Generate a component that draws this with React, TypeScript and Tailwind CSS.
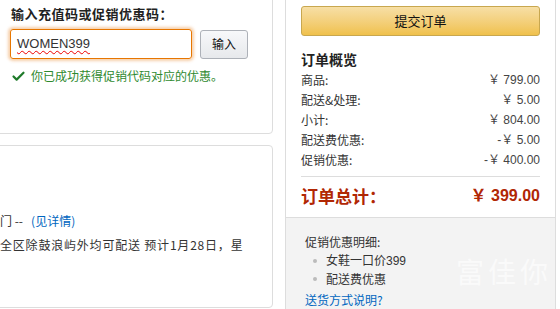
import { Check } from "lucide-react";

const rows = [
  ["商品:", "￥ 799.00"],
  ["配送&处理:", "￥ 5.00"],
  ["小计:", "￥ 804.00"],
  ["配送费优惠:", "-￥ 5.00"],
  ["促销优惠:", "-￥ 400.00"],
];

export default function App() {
  return (
    <div className="relative flex h-[309px] w-[560px] overflow-hidden bg-white text-[12px] text-[#333] [font-family:'Noto_Sans_CJK_SC','Liberation_Sans',sans-serif]">
      {/* 左侧：优惠码 + 配送信息 */}
      <div className="flex w-[273px] shrink-0 flex-col gap-[11px]">
        <div className="-ml-3 -mt-3 h-[146px] rounded-br-[4px] border border-[#dddddd] pl-[22px] pt-[17px]">
          <div className="text-[13px] font-bold leading-[16px] tracking-[0.5px] text-[#222]">输入充值码或促销优惠码：</div>
          <div className="mt-[7px] flex items-center gap-[8px]">
            <div className="-ml-[1px] flex h-[30px] w-[182px] items-center rounded-[3px] border border-[#e77600] px-[6px] text-[13px] shadow-[0_0_3px_2px_rgba(228,121,17,0.35)] [font-family:'Liberation_Sans',sans-serif]">
              <span className="underline decoration-wavy decoration-[#e00] decoration-1 underline-offset-2">WOMEN399</span>
            </div>
            <button className="h-[29px] w-[48px] rounded-[3px] border border-[#adb1b8] bg-gradient-to-b from-[#f7f8fa] to-[#e7e9ec] text-[12px] text-[#111]">
              输入
            </button>
          </div>
          <div className="mt-[8px] flex items-center gap-[5px] text-[#2f8a2f]">
            <Check size={15} strokeWidth={3.5} className="text-[#1f7a2a]" />
            <span>你已成功获得促销代码对应的优惠。</span>
          </div>
        </div>
        <div className="-ml-3 h-[163px] rounded-r-[4px] border border-[#dddddd] pl-[11px] pt-[65px]">
          <div className="leading-[20px]">
            <span className="text-[#333]">门 --&nbsp;&nbsp;&nbsp;</span>
            <span className="text-[#0066c0]">(见详情)</span>
          </div>
          <div className="mt-[4px] whitespace-nowrap leading-[20px] tracking-[0.8px] text-[#333]">全区除鼓浪屿外均可配送 预计1月28日，星</div>
        </div>
      </div>

      {/* 右侧：订单摘要 */}
      <div className="ml-[12px] flex w-[271px] shrink-0 flex-col border-x border-[#dddddd]">
        <div className="h-[222px] border-b border-[#dddddd] bg-white px-[15px] pt-[6px]">
          <button className="h-[30px] w-full rounded-[3px] border border-[#c8a74f] bg-gradient-to-b from-[#f7dfa5] to-[#f0c14b] text-[13px] text-[#111]">
            提交订单
          </button>
          <div className="mt-[15px] text-[14px] font-bold leading-[16px] text-[#222]">订单概览</div>
          <div className="mt-[3px]">
            {rows.map(([label, value]) => (
              <div key={label} className="flex h-[20px] items-center justify-between">
                <span>{label}</span>
                <span className="text-[#444] [font-family:'Liberation_Sans','Noto_Sans_CJK_SC',sans-serif]">{value}</span>
              </div>
            ))}
          </div>
          <div className="mt-[6px] border-t border-[#dddddd] pt-[8px]">
            <div className="flex items-center justify-between font-bold leading-[22px] text-[#b12704]">
              <span className="text-[17px]">订单总计：</span>
              <span className="text-[16px] [font-family:'Liberation_Sans','Noto_Sans_CJK_SC',sans-serif]">￥ 399.00</span>
            </div>
          </div>
        </div>
        <div className="flex-1 bg-[#f3f3f3] px-[19px] pt-[15px] leading-[18px]">
          <div>促销优惠明细:</div>
          <ul className="pl-[8px]">
            <li className="flex items-center gap-[9px]">
              <span className="h-[4px] w-[4px] rounded-full bg-[#bbbbbb]" />
              <span>
                女鞋一口价<span className="[font-family:'Liberation_Sans',sans-serif]">399</span>
              </span>
            </li>
            <li className="flex items-center gap-[9px]">
              <span className="h-[4px] w-[4px] rounded-full bg-[#bbbbbb]" />
              <span>配送费优惠</span>
            </li>
          </ul>
          <div className="mt-[3px] text-[#0066c0]">送货方式说明?</div>
        </div>
      </div>

      {/* 水印 */}
      <div className="pointer-events-none absolute left-[456px] top-[250px] whitespace-nowrap text-[28px] tracking-[4px] text-white/60">富佳你</div>
    </div>
  );
}
